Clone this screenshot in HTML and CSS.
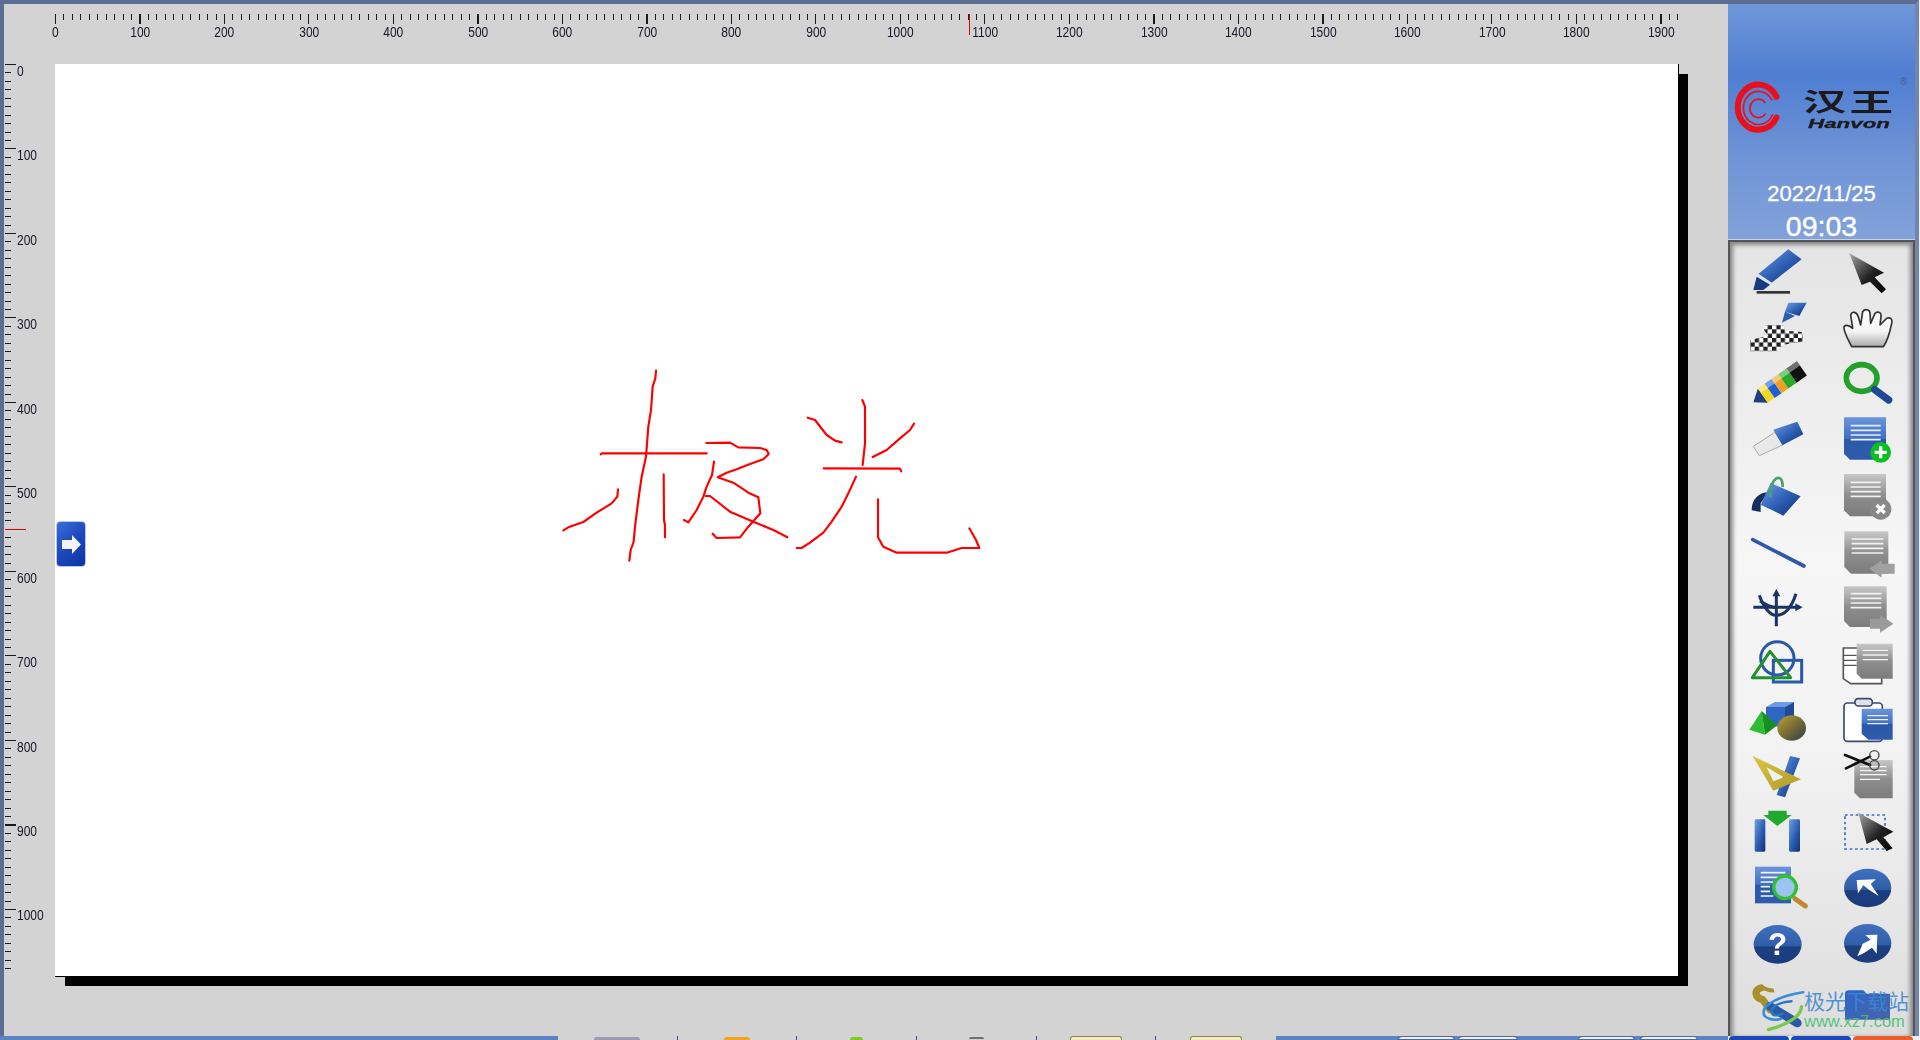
FILE: index.html
```html
<!DOCTYPE html>
<html lang="zh">
<head>
<meta charset="utf-8">
<title>汉王</title>
<link rel="stylesheet" href="styles.css">
</head>
<body>
<svg class="defs" aria-hidden="true">
  <defs>
    <linearGradient id="blue" x1="0" y1="0" x2="1" y2="1"><stop offset="0" stop-color="#6f9fe8"/><stop offset=".55" stop-color="#2a5cb0"/><stop offset="1" stop-color="#123170"/></linearGradient>
    <linearGradient id="page" x1="0" y1="0" x2="0" y2="1"><stop offset="0" stop-color="#6a94dc"/><stop offset=".5" stop-color="#3f6fc4"/><stop offset=".51" stop-color="#2c58a8"/><stop offset="1" stop-color="#2f5bac"/></linearGradient>
    <linearGradient id="gray" x1="0" y1="0" x2="0" y2="1"><stop offset="0" stop-color="#c8c8c8"/><stop offset=".5" stop-color="#8e8e8e"/><stop offset="1" stop-color="#7c7c7c"/></linearGradient>
    <linearGradient id="cursor" x1="0" y1="0" x2="1" y2="1"><stop offset="0" stop-color="#a8a8a8"/><stop offset=".55" stop-color="#222"/><stop offset="1" stop-color="#000"/></linearGradient>
    <linearGradient id="ball" x1="0" y1="0" x2="1" y2="1"><stop offset="0" stop-color="#c0a030"/><stop offset="1" stop-color="#2e3a40"/></linearGradient>
    <linearGradient id="hand" x1="0" y1="0" x2="0" y2="1"><stop offset="0" stop-color="#fff"/><stop offset=".6" stop-color="#f4f4f4"/><stop offset="1" stop-color="#aaa"/></linearGradient>
    <linearGradient id="gold" x1="0" y1="0" x2="1" y2="1"><stop offset="0" stop-color="#dcc648"/><stop offset="1" stop-color="#b09a28"/></linearGradient>
    <linearGradient id="disc" x1="0" y1="0" x2="0" y2="1"><stop offset="0" stop-color="#3f70c0"/><stop offset=".55" stop-color="#2f5ea8"/><stop offset=".56" stop-color="#1d3f80"/><stop offset="1" stop-color="#1b3c7c"/></linearGradient>
    <linearGradient id="folder" x1="0" y1="0" x2="1" y2="1"><stop offset="0" stop-color="#2c66c8"/><stop offset="1" stop-color="#4a62a8"/></linearGradient>
    <pattern id="check" width="26" height="26" patternUnits="userSpaceOnUse"><rect width="26" height="26" fill="#fff"/><rect width="13" height="13" fill="#222"/><rect x="13" y="13" width="13" height="13" fill="#222"/></pattern>
  </defs>
</svg>

<div class="window">
  <div class="work">
    <main class="stage">
      <div class="corner"></div>
      <div class="ruler-top">
        <div class="ticks-h"></div>
        <div class="labels-h">
          <span>0</span><span>100</span><span>200</span><span>300</span><span>400</span><span>500</span><span>600</span><span>700</span><span>800</span><span>900</span><span>1000</span><span>1100</span><span>1200</span><span>1300</span><span>1400</span><span>1500</span><span>1600</span><span>1700</span><span>1800</span><span>1900</span>
        </div>
        <i class="marker-h"></i>
      </div>
      <div class="ruler-left">
        <div class="ticks-v"></div>
        <div class="labels-v">
          <span>0</span><span>100</span><span>200</span><span>300</span><span>400</span><span>500</span><span>600</span><span>700</span><span>800</span><span>900</span><span>1000</span>
        </div>
        <i class="marker-v"></i>
      </div>
      <div class="canvas">
        <svg class="ink" viewBox="0 0 1380 720" aria-label="手写">
          <g fill="none" stroke="#f00" stroke-width="6.5" stroke-linejoin="round" stroke-linecap="round">
            <polyline points="348,62 346,85 338,110 333,180 325,230 318,320 305,380 295,450 285,530 281,575 272,600 268,632"/>
            <polyline points="182,313 186,310 500,310"/>
            <polyline points="70,541 85,532 130,516 170,488 215,460 232,440 234,418"/>
            <polyline points="371,373 372,510 375,525 375,562"/>
            <polyline points="499,279 570,278 595,292 660,294 680,300 686,312 670,328 630,342 590,358 560,368 533,382 580,398 625,428 655,442 661,490 625,530 600,562 530,564 518,551"/>
            <polyline points="522,335 516,375 500,410 490,440 470,480 445,517 432,510"/>
            <polyline points="497,438 510,438 570,485 640,515 700,540 742,562"/>
            <polyline points="967,150 975,170 975,280 968,345"/>
            <polyline points="803,203 825,210 860,255 885,272 905,277"/>
            <polyline points="998,321 1040,300 1080,265 1110,240 1122,221"/>
            <polyline points="851,355 1080,356 1084,364"/>
            <polyline points="948,380 925,430 905,470 875,515 850,548 810,578 785,594 770,594"/>
            <polyline points="1014,448 1014,562 1030,590 1070,608 1220,608 1265,594 1318,594 1308,570 1288,535"/>
          </g>
        </svg>
        <button class="expand" aria-label="展开">
          <svg viewBox="0 0 19 19" width="19" height="19"><polygon points="0,5 10,5 10,0 19,9.5 10,19 10,14 0,14" fill="#f2f4fa"/></svg>
        </button>
      </div>
    </main>

    <aside class="sidebar">
      <header class="brand">
        <div class="logo">
          <svg class="logo-mark" viewBox="35 245 150 160">
            <g fill="none" stroke="#e8101c" stroke-linecap="round">
              <path d="M172 296A62 68 0 1 0 172 358" stroke-width="18"/>
              <path d="M158 305A46 50 0 1 0 160 350" stroke-width="5"/>
              <path d="M137 312A26 28 0 1 0 138 348" stroke-width="5"/>
            </g>
          </svg>
          <div class="logo-text">
            <span class="logo-cn">汉王</span>
            <span class="logo-en">Hanvon</span>
          </div>
          <span class="logo-reg">®</span>
        </div>
        <div class="date">2022/11/25</div>
        <div class="time">09:03</div>
      </header>

      <section class="tools">
        <!-- row 1 -->
        <svg class="tool" viewBox="84 735 180 156"><polygon points="205,748 245,778 155,848 115,822" fill="url(#blue)"/><polygon points="115,822 155,848 150,854 110,830" fill="#dfe6f2"/><polygon points="110,830 150,854 130,870 100,870" fill="#173b80"/><rect x="110" y="873" width="100" height="8" fill="#333"/></svg>
        <svg class="tool" viewBox="351 735 180 156"><polygon points="388,760 492,818 464,832 498,868 485,880 450,845 425,855" fill="url(#cursor)"/></svg>
        <!-- row 2 -->
        <svg class="tool" viewBox="84 903 180 156"><polygon points="205,908 260,908 238,948 195,935" fill="url(#blue)"/><polygon points="195,935 225,948 186,968" fill="#2c5cae"/><path d="M135 975H190L195 992L245 996L252 1024L190 1034L170 1054H90V1020L145 1008L132 990Z" fill="url(#check)"/></svg>
        <svg class="tool" viewBox="351 903 180 156"><path d="M395 1040C385 1020 370 995 372 980C380 972 392 980 398 985L392 945C396 932 410 935 415 950L422 975L428 935C435 925 450 928 450 940L452 970L465 940C475 932 485 938 483 950L480 975L500 955C512 950 518 958 515 970C510 995 505 1020 490 1040Z" fill="url(#hand)" stroke="#333" stroke-width="5" stroke-linejoin="round"/></svg>
        <!-- row 3 -->
        <svg class="tool" viewBox="84 22 180 156"><g transform="translate(100 158) rotate(-35)"><polygon points="0,0 35,-26 35,26" fill="#1f3d80"/><rect x="35" y="-26" width="25" height="52" fill="#f4d820"/><rect x="60" y="-26" width="25" height="52" fill="#1a5fd8"/><rect x="85" y="-26" width="25" height="52" fill="#f0a020"/><rect x="110" y="-26" width="30" height="52" fill="#2aa82a"/><rect x="140" y="-26" width="38" height="52" fill="#111"/><rect x="35" y="-26" width="143" height="16" fill="#fff" opacity=".4"/></g></svg>
        <svg class="tool" viewBox="351 22 180 156"><ellipse cx="425" cy="85" rx="46" ry="40" fill="none" stroke="#22a02a" stroke-width="17"/><line x1="464" y1="120" x2="506" y2="151" stroke="#1e4a92" stroke-width="22" stroke-linecap="round"/></svg>
        <!-- row 4 -->
        <svg class="tool" viewBox="84 190 180 156"><polygon points="100,290 165,248 190,285 118,318" fill="#e8e8e8" stroke="#aaa" stroke-width="3"/><polygon points="160,240 232,216 250,254 187,287" fill="url(#blue)"/></svg>
        <svg class="tool" viewBox="351 190 180 156"><path d="M372 203H498V330H390L372 312Z" fill="url(#page)"/><path d="M392 228H482M392 242H482M392 256H482M392 270H482" stroke="#e8eef8" stroke-width="5"/><circle cx="482" cy="308" r="31" fill="#08c020"/><path d="M482 290V326M464 308H500" stroke="#fff" stroke-width="10"/></svg>
        <!-- row 5 -->
        <svg class="tool" viewBox="84 358 180 156"><path d="M95 482C95 445 120 428 146 428L122 460V487Z" fill="#14305f"/><polygon points="152,400 242,440 190,498 122,465" fill="url(#blue)"/><path d="M152 442C145 385 190 362 188 412" fill="none" stroke="#46a468" stroke-width="8"/></svg>
        <svg class="tool" viewBox="351 358 180 156"><path d="M372 373H498V500H390L372 482Z" fill="url(#gray)"/><path d="M392 398H482M392 412H482M392 426H482M392 440H482" stroke="#f2f2f2" stroke-width="5"/><circle cx="482" cy="478" r="32" fill="#888"/><path d="M470 466L494 490M494 466L470 490" stroke="#fff" stroke-width="10"/></svg>
        <!-- row 6 -->
        <svg class="tool" viewBox="84 527 180 156"><line x1="98" y1="568" x2="252" y2="647" stroke="#2f58a8" stroke-width="11" stroke-linecap="round"/></svg>
        <svg class="tool" viewBox="351 527 180 156"><path d="M373 543H505V670H393L373 650Z" fill="url(#gray)"/><path d="M395 566H490M395 580H490M395 594H490M395 608H490" stroke="#f2f2f2" stroke-width="5"/><polygon points="448,655 485,630 485,640 524,640 524,670 485,670 485,682" fill="#a0a0a0"/></svg>
        <!-- row 7 -->
        <svg class="tool" viewBox="84 695 180 156"><g fill="none" stroke="#1a3565" stroke-width="9"><path d="M169 728V828M100 771H240"/><path d="M118 735C130 770 150 795 168 795C195 795 215 770 228 730"/><path d="M120 752C135 762 150 770 170 772"/></g><path d="M169 716L157 738H181ZM248 771L226 759V783Z" fill="#1a3565"/></svg>
        <svg class="tool" viewBox="351 695 180 156"><path d="M372 708H500V830H390L372 812Z" fill="url(#gray)"/><path d="M392 730H484M392 744H484M392 758H484M392 772H484" stroke="#f2f2f2" stroke-width="5"/><polygon points="520,820 480,793 480,805 450,805 450,835 480,835 480,847" fill="#9a9a9a"/></svg>
        <!-- row 8 -->
        <svg class="tool" viewBox="84 863 180 156"><g fill="none"><circle cx="172" cy="924" r="50" stroke="#2858a8" stroke-width="9"/><rect x="160" y="930" width="85" height="65" stroke="#2858a8" stroke-width="9"/><polygon points="150,903 212,982 97,982" stroke="#229030" stroke-width="9" stroke-linejoin="round"/></g></svg>
        <svg class="tool" viewBox="351 863 180 156"><path d="M370 893H485V1000H392L370 985Z" fill="#fff" stroke="#555" stroke-width="5"/><path d="M372 915H410M372 930H410M372 945H410" stroke="#555" stroke-width="4"/><path d="M410 880H518V985H425L410 970Z" fill="url(#gray)"/><path d="M428 900H504M428 914H504M428 928H504" stroke="#f2f2f2" stroke-width="4"/></svg>
        <!-- row 9 -->
        <svg class="tool" viewBox="84 11 180 156"><polygon points="138,50 165,35 222,35 195,50" fill="#6d9be4"/><rect x="138" y="50" width="57" height="58" fill="#2f66c4"/><polygon points="195,50 222,35 222,90 195,108" fill="#1f4a98"/><polygon points="125,62 88,118 135,133" fill="#2ebc34"/><polygon points="125,62 135,133 172,105" fill="#159020"/><ellipse cx="215" cy="113" rx="43" ry="38" fill="url(#ball)"/></svg>
        <svg class="tool" viewBox="351 11 180 156"><rect x="372" y="38" width="115" height="115" rx="10" fill="#fff" stroke="#3c4a70" stroke-width="5"/><rect x="405" y="25" width="52" height="22" rx="10" fill="#dfe3ee" stroke="#3c4a70" stroke-width="5"/><path d="M425 55H518V148H445L425 130Z" fill="url(#page)"/><path d="M442 76H504M442 88H504M442 100H504" stroke="#eef" stroke-width="4"/></svg>
        <!-- row 10 -->
        <svg class="tool" viewBox="84 180 180 156"><polygon points="210,198 240,205 195,322 170,315" fill="url(#blue)"/><path d="M97 197L243 268L160 302ZM140 232L160 274L192 262Z" fill="url(#gold)" fill-rule="evenodd"/></svg>
        <svg class="tool" viewBox="351 180 180 156"><path d="M403 210H518V325H420L403 308Z" fill="url(#gray)"/><path d="M420 230H500M420 242H500M420 254H500M420 268H480" stroke="#f4f4f4" stroke-width="4"/><g fill="none" stroke="#111" stroke-linecap="round"><path d="M375 195L450 225M378 235L450 200" stroke-width="8"/><circle cx="463" cy="196" r="14" stroke-width="4" stroke="#444"/><circle cx="463" cy="226" r="14" stroke-width="4" stroke="#444"/></g></svg>
        <!-- row 11 -->
        <svg class="tool" viewBox="84 348 180 156"><rect x="104" y="388" width="32" height="97" rx="4" fill="url(#blue)"/><rect x="207" y="388" width="33" height="97" rx="4" fill="url(#blue)"/><polygon points="145,362 200,362 200,375 215,375 172,408 130,375 145,375" fill="#22a82c"/></svg>
        <svg class="tool" viewBox="351 348 180 156"><rect x="375" y="375" width="120" height="102" fill="none" stroke="#3a6cc0" stroke-width="5" stroke-dasharray="8 8"/><polygon points="415,368 520,425 490,442 518,475 500,483 470,448 440,462" fill="url(#cursor)"/></svg>
        <!-- row 12 -->
        <svg class="tool" viewBox="84 516 180 156"><rect x="105" y="530" width="108" height="110" fill="url(#page)"/><path d="M122 548H196M122 562H180M122 576H160M122 590H150M122 604H150M122 618H160" stroke="#f0f4fc" stroke-width="5"/><line x1="225" y1="626" x2="256" y2="648" stroke="#c08830" stroke-width="15" stroke-linecap="round"/><circle cx="195" cy="592" r="34" fill="#9cc4f0" stroke="#30c030" stroke-width="10"/></svg>
        <svg class="tool" viewBox="351 516 180 156"><ellipse cx="443" cy="594" rx="71" ry="58" fill="url(#disc)"/><polygon points="410,570 468,568 452,582 476,618 448,600 430,586 414,610" fill="#fff"/></svg>
        <!-- row 13 -->
        <svg class="tool" viewBox="84 685 180 156"><ellipse cx="173" cy="764" rx="72" ry="58" fill="url(#disc)"/><text class="help" x="173" y="796" text-anchor="middle">?</text></svg>
        <svg class="tool" viewBox="351 685 180 156"><ellipse cx="443" cy="761" rx="71" ry="58" fill="url(#disc)"/><polygon points="472,735 470,792 456,774 432,790 412,800 428,762 452,750 436,736" fill="#fff"/></svg>
        <!-- row 14 -->
        <svg class="tool" viewBox="84 853 180 156"><path d="M122 895C100 900 105 925 128 930L150 960" fill="none" stroke="#a8902c" stroke-width="22" stroke-linecap="round"/><path d="M125 892C140 900 150 905 162 902" fill="none" stroke="#a8902c" stroke-width="12"/><line x1="150" y1="950" x2="232" y2="1000" stroke="#2c58a8" stroke-width="26" stroke-linecap="round"/></svg>
        <svg class="tool" viewBox="351 853 180 156"><path d="M375 912C375 905 380 902 388 902H430L440 912H510V990H375Z" fill="url(#folder)"/></svg>

        <div class="watermark">
          <svg class="wm-mark" viewBox="115 895 135 130"><g fill="none" stroke-linecap="round"><path d="M245 905C180 915 125 940 125 965C125 985 155 992 178 985" stroke="#3a8ed8" stroke-width="8"/><path d="M210 932C170 935 145 950 150 968C155 978 170 976 182 970" stroke="#2878c0" stroke-width="7"/><path d="M240 948C240 980 190 1005 140 1018" stroke="#7ac850" stroke-width="10"/></g></svg>
          <div class="wm-text">
            <span class="wm-cn">极光下载站</span>
            <span class="wm-en">www.xz7.com</span>
          </div>
        </div>
      </section>
    </aside>
  </div>

  <footer class="taskbar">
    <div class="bar-blue bar-start"></div>
    <div class="cell"><i class="peek peek-slate"></i></div>
    <div class="cell"><i class="peek peek-orange"></i></div>
    <div class="cell"><i class="peek peek-green"></i></div>
    <div class="cell"><i class="peek peek-dark"></i></div>
    <div class="cell"><i class="peek peek-cream"></i></div>
    <div class="cell cell-last"><i class="peek peek-cream"></i></div>
    <div class="bar-blue bar-mid">
      <i class="chip chip-a"></i><i class="chip chip-b"></i>
      <i class="chip chip-c"></i><i class="chip chip-d"></i>
    </div>
    <div class="side-btns">
      <i class="sbtn sbtn-blue"></i><i class="sbtn sbtn-blue"></i><i class="sbtn sbtn-red"></i>
    </div>
  </footer>
</div>
</body>
</html>
```

FILE: styles.css
```css
* { box-sizing: border-box; }

html, body {
  margin: 0;
  height: 100%;
  overflow: hidden;
}

body {
  background: #eef0f4;
  font-family: "Liberation Sans", Arial, sans-serif;
}

.defs { width: 0; height: 0; display: block; }

.window {
  width: 1920px;
  height: 1040px;
  display: flex;
  flex-direction: column;
}

.work {
  display: flex;
  height: 1036px;
}

/* stage: rulers and paper */
.stage {
  width: 1728px;
  background: #d3d3d3;
  border-top: 4px solid #5d6c92;
  border-left: 4px solid #5d6c92;
  display: grid;
  grid-template-columns: 51px 1fr;
  grid-template-rows: 60px 1fr;
}

.ruler-top {
  position: relative;
  padding-top: 10px;
}

.ticks-h {
  width: 1624px;
  height: 10px;
  background:
    repeating-linear-gradient(90deg, #1a1a1a 0 1px, transparent 1px 8.45px) 0 0 / 100% 6px no-repeat,
    repeating-linear-gradient(90deg, #1a1a1a 0 1px, transparent 1px 84.5px) 0 0 / 100% 10px no-repeat;
}

.labels-h {
  display: flex;
  margin-left: -41.7px;
}

.labels-h span {
  flex: 0 0 84.5px;
  text-align: center;
  font-size: 15px;
  line-height: 16px;
  color: #16162a;
  transform: scaleX(.8);
}

.marker-h {
  position: absolute;
  left: 914px;
  top: 10px;
  width: 1px;
  height: 21px;
  background: #e8000c;
}

.ruler-left {
  position: relative;
  display: flex;
  padding-left: 1px;
}

.ticks-v {
  width: 11px;
  height: 913px;
  flex: none;
  background:
    repeating-linear-gradient(180deg, #1a1a1a 0 1px, transparent 1px 8.45px) 0 0 / 6px 100% no-repeat,
    repeating-linear-gradient(180deg, #1a1a1a 0 1px, transparent 1px 84.5px) 0 0 / 11px 100% no-repeat;
}

.labels-v {
  display: flex;
  flex-direction: column;
  margin-left: 1px;
  margin-top: -1px;
}

.labels-v span {
  flex: 0 0 84.45px;
  font-size: 15px;
  line-height: 16px;
  color: #16162a;
  transform: scaleX(.8);
  transform-origin: left top;
}

.marker-v {
  position: absolute;
  left: 1px;
  top: 465px;
  width: 21px;
  height: 1px;
  background: #e8000c;
}

.canvas {
  position: relative;
  width: 1624px;
  height: 913px;
  background: #fff;
  border-right: 1px solid #000;
  border-bottom: 1px solid #000;
  box-shadow: 9.5px 9.5px 0 -.5px #000;
}

.ink {
  position: absolute;
  left: 485px;
  top: 286px;
  width: 460px;
  height: 240px;
}

.expand {
  position: absolute;
  left: 1px;
  top: 457px;
  width: 30px;
  height: 46px;
  padding: 0;
  border: 1px solid #b8c6ec;
  border-radius: 4px;
  background: linear-gradient(135deg, #3a6ed8 0%, #1c48bc 50%, #0e34a4 100%);
  display: flex;
  align-items: center;
  justify-content: center;
}

/* right sidebar */
.sidebar {
  width: 191px;
  border-top: 4px solid #5d6c92;
  border-right: 4px solid #7485aa;
  display: flex;
  flex-direction: column;
}

.brand {
  height: 236px;
  flex: none;
  padding-top: 76px;
  border-bottom: 1px solid #c4d2ec;
  background: linear-gradient(180deg, #7197da 0%, #4f7ed2 30%, #6f93d6 65%, #82a2da 100%);
  display: flex;
  flex-direction: column;
  align-items: center;
}

.logo {
  position: relative;
  width: 187px;
  height: 58px;
  display: flex;
  align-items: flex-start;
  gap: 22px;
  padding-left: 3px;
}

.logo-mark {
  width: 50px;
  height: 53px;
  flex: none;
}

.logo-text {
  display: flex;
  flex-direction: column;
  padding-top: 5px;
}

.logo-cn {
  display: block;
  width: 66px;
  height: 28px;
  font-family: "Noto Sans CJK SC", sans-serif;
  font-weight: 700;
  font-size: 30px;
  line-height: 34px;
  letter-spacing: 2px;
  white-space: nowrap;
  color: #1c1a1c;
  transform: scale(1.45, .85);
  transform-origin: left top;
}

.logo-en {
  display: block;
  margin-left: 5px;
  margin-top: 3px;
  font-weight: 700;
  font-style: italic;
  font-size: 13px;
  line-height: 15px;
  color: #1c1a1c;
  transform: scaleX(1.72);
  transform-origin: left center;
  -webkit-text-stroke: .3px #1c1a1c;
}

.logo-reg {
  position: absolute;
  left: 172px;
  top: -4px;
  font-size: 10px;
  color: #44608c;
}

.date {
  margin-top: 48px;
  font-size: 22px;
  line-height: 26px;
  color: #fff;
  -webkit-text-stroke: .3px #fff;
}

.time {
  margin-top: 3px;
  font-size: 28.5px;
  line-height: 32px;
  color: #fff;
  -webkit-text-stroke: .4px #fff;
}

.tools {
  position: relative;
  flex: 1;
  display: grid;
  grid-template-columns: 89px 89px;
  grid-auto-rows: 56.1px;
  align-content: start;
  padding: 1px 0 0 3.5px;
  border: 2px solid #555;
  border-bottom: 0;
  background: linear-gradient(180deg, #e4e4e4 0%, #f6f6f6 40%, #f2f2f2 65%, #dddddd 100%);
  box-shadow: inset 5px 0 4px -2px #888, inset -5px 0 4px -2px #888, inset 0 5px 4px -2px #888;
}

.tool {
  width: 60px;
  height: 52px;
  place-self: center;
  overflow: visible;
  filter: blur(.4px);
}

.help {
  font-family: "Liberation Sans", Arial, sans-serif;
  font-weight: 700;
  font-size: 94px;
  fill: #fff;
}

.watermark {
  position: absolute;
  left: 30px;
  top: 747px;
  display: flex;
  align-items: flex-start;
}

.wm-mark {
  width: 45px;
  height: 43px;
  flex: none;
}

.wm-text {
  display: flex;
  flex-direction: column;
  margin-left: -1px;
}

.wm-cn {
  font-family: "Noto Sans CJK SC", sans-serif;
  font-size: 21px;
  line-height: 22px;
  color: rgba(60, 135, 210, .88);
  white-space: nowrap;
}

.wm-en {
  margin-top: 2px;
  font-size: 16.5px;
  line-height: 17px;
  color: rgba(70, 190, 110, .9);
  white-space: nowrap;
}

/* bottom strip */
.taskbar {
  height: 4px;
  display: flex;
  overflow: hidden;
}

.bar-blue { background: #5c82c2; height: 100%; }
.bar-start { width: 558px; }

.cell {
  width: 119.67px;
  background: #d3d3d3;
  border-right: 1px solid #2a50a8;
  display: flex;
  justify-content: center;
}

.cell-last { border-right: 0; }

.peek { display: block; border-radius: 3px 3px 0 0; }
.peek-slate { width: 46px; margin-top: 1px; background: #9a9ab0; }
.peek-orange { width: 26px; margin-top: 1px; background: #f0a420; }
.peek-green { width: 13px; margin-top: 1px; background: #7ccc20; }
.peek-dark { width: 15px; height: 2px; margin-top: 1px; background: #707070; }
.peek-cream { width: 52px; background: #f2ecc4; border: 1px solid #8c8448; border-bottom: 0; }

.bar-mid {
  width: 452px;
  display: flex;
  padding-left: 122px;
}

.chip {
  display: block;
  height: 100%;
  background: #f0f0f2;
  border: 1px solid #4a6aa8;
  border-radius: 4px 4px 0 0;
}

.chip-a { width: 57px; }
.chip-b { width: 60px; margin-left: 3px; }
.chip-c { width: 57px; margin-left: 60px; }
.chip-d { width: 58px; margin-left: 5px; }

.side-btns {
  width: 187px;
  display: flex;
  gap: 2px;
  padding-left: 1px;
}

.sbtn { display: block; height: 100%; width: 60px; border-radius: 4px 4px 0 0; }
.sbtn-blue { background: #1c48b8; }
.sbtn-red { background: #e86030; }
```
